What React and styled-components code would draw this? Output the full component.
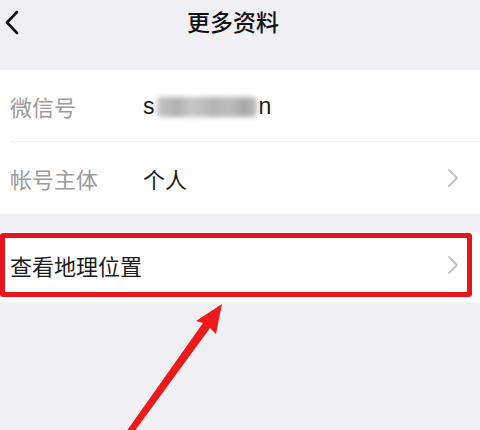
import React from "react";
import styled, { createGlobalStyle } from "styled-components";

const Global = createGlobalStyle`
  html, body { margin: 0; padding: 0; }
  body {
    background: #efeff4;
    font-family: "Noto Sans CJK SC", "Noto Sans", sans-serif;
    width: 480px;
    height: 430px;
    overflow: hidden;
  }
`;

const Screen = styled.div`
  position: relative;
  width: 480px;
  height: 430px;
  background: #efeff4;
  display: flex;
  flex-direction: column;
  overflow: hidden;
`;

const Header = styled.div`
  height: 70px;
  display: grid;
  grid-template-columns: 40px 1fr 40px;
  align-items: start;
  padding-top: 4px;
  box-sizing: border-box;
`;

const BackButton = styled.div`
  display: flex;
  padding: 6px 0 0 4px;
`;

const Title = styled.div`
  text-align: center;
  font-size: 23px;
  font-weight: 500;
  color: #111;
  line-height: 34px;
  padding-right: 14px;
`;

const Card = styled.div`
  background: #fff;
  display: flex;
  flex-direction: column;
  margin-top: ${(p) => p.$gap || 0}px;
`;

const Row = styled.div`
  position: relative;
  height: ${(p) => p.$h || 72}px;
  display: flex;
  align-items: center;
  padding: 0 20px 0 10px;
  box-sizing: border-box;
  border-bottom: ${(p) => (p.$divider ? "1px solid #ececef" : "none")};
  margin-left: ${(p) => (p.$divider ? 10 : 0)}px;
  padding-left: ${(p) => (p.$divider ? 0 : 10)}px;
  padding-bottom: ${(p) => p.$pb || 0}px;
`;

const Highlight = styled.div`
  position: absolute;
  left: 0;
  top: 1px;
  width: 472px;
  height: 64px;
  box-sizing: border-box;
  border: 5px solid #e8141b;
  border-radius: 3px;
  pointer-events: none;
`;

const Label = styled.div`
  width: 133px;
  font-size: 22px;
  color: ${(p) => (p.$strong ? "#1c1c1c" : "#9b9b9b")};
  flex: ${(p) => (p.$strong ? 1 : "none")};
  line-height: 30px;
`;

const Value = styled.div`
  flex: 1;
  font-size: 22px;
  color: #1a1a1a;
  display: flex;
  align-items: center;
  line-height: 30px;
`;

const Latin = styled.span`
  font-family: "Liberation Sans", Arial, sans-serif;
  font-size: 23px;
`;

const Blurred = styled.span`
  display: inline-block;
  width: 100px;
  height: 20px;
  margin: 2px 2px 0;
  border-radius: 4px;
  background: linear-gradient(90deg, #c4c4c4 0%, #b0b0b0 20%, #c8c8c8 35%, #b4b4b4 55%, #bcbcbc 72%, #a8a8a8 88%, #c0c0c0 100%);
  filter: blur(2.5px);
`;

const Arrow = styled.svg`
  position: absolute;
  left: 0;
  top: 0;
  pointer-events: none;
`;

const Chevron = () => (
  <svg width="14" height="22" viewBox="0 0 14 22">
    <path d="M3 3 L11 11 L3 19" fill="none" stroke="#c4c4c8" strokeWidth="2" strokeLinecap="round" strokeLinejoin="round" />
  </svg>
);

export default function App() {
  return (
    <>
      <Global />
      <Screen>
        <Header>
          <BackButton>
            <svg width="16" height="26" viewBox="0 0 16 26">
              <path d="M13 2 L3 12.5 L13 23" fill="none" stroke="#111" strokeWidth="2.6" strokeLinecap="round" strokeLinejoin="round" />
            </svg>
          </BackButton>
          <Title>更多资料</Title>
          <div />
        </Header>
        <Card>
          <Row $divider>
            <Label>微信号</Label>
            <Value>
              <Latin>s</Latin>
              <Blurred aria-hidden="true" />
              <Latin>n</Latin>
            </Value>
          </Row>
          <Row>
            <Label>帐号主体</Label>
            <Value>个人</Value>
            <Chevron />
          </Row>
        </Card>
        <Card $gap={18}>
          <Row $h={71} $pb={6}>
            <Label $strong>查看地理位置</Label>
            <Chevron />
            <Highlight />
          </Row>
        </Card>
        <Arrow width="480" height="430" viewBox="0 0 480 430">
          <polygon
            points="126,432 203,323 196,321 222,304 216,334 210,328 134,432"
            fill="#ee1a1a"
          />
        </Arrow>
      </Screen>
    </>
  );
}
